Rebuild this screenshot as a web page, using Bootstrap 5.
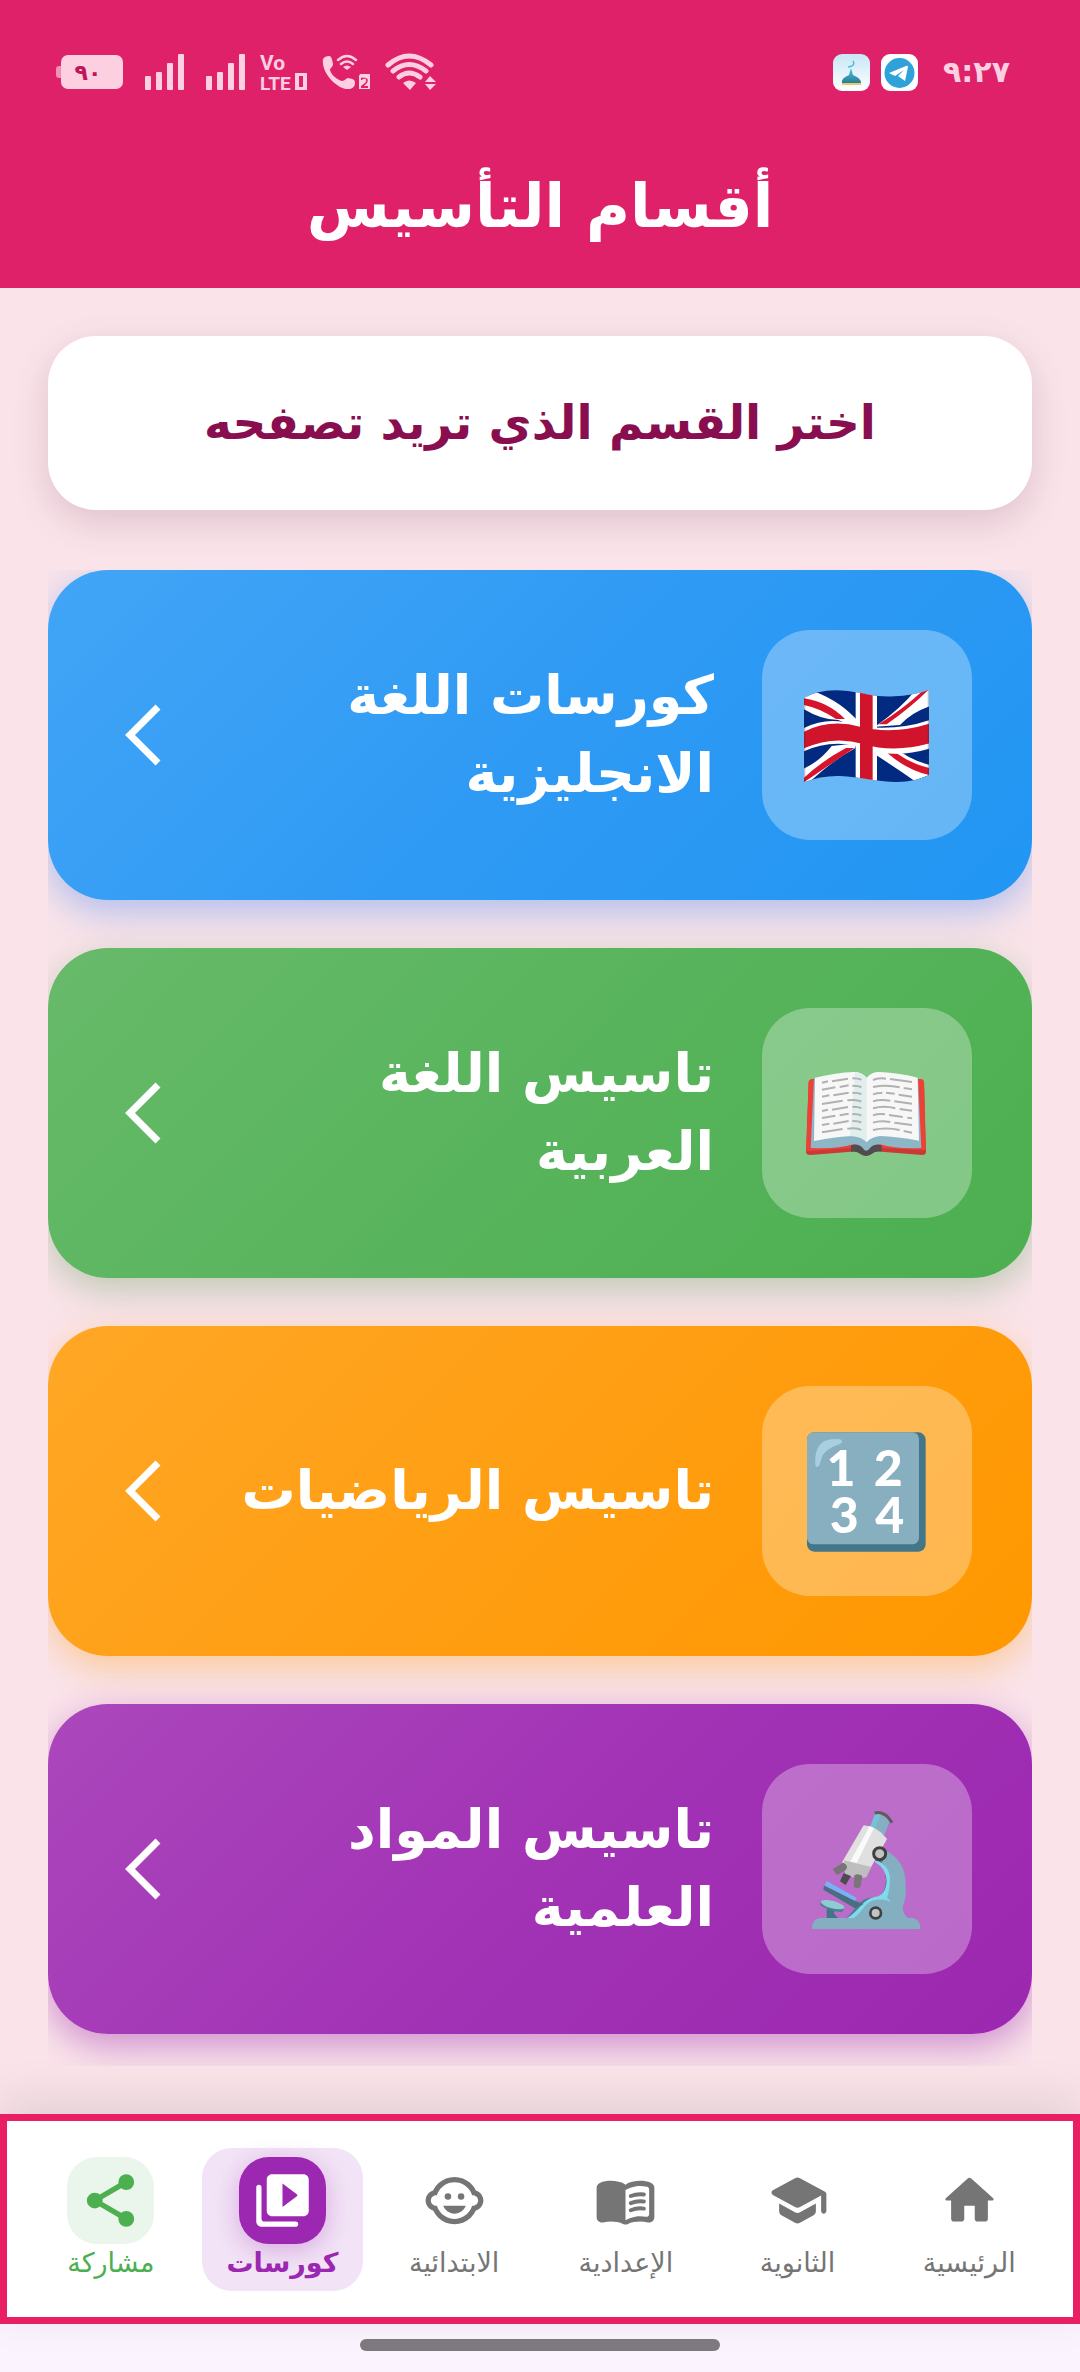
<!DOCTYPE html>
<html lang="ar" dir="rtl">
<head>
<meta charset="utf-8">
<meta name="viewport" content="width=device-width, initial-scale=1">
<title>أقسام التأسيس</title>
<link href="https://cdn.jsdelivr.net/npm/bootstrap@5.3.0/dist/css/bootstrap.min.css" rel="stylesheet">
<style>
  body { background: #fae4ea; font-family: "DejaVu Sans", sans-serif; }
  .app-header { background: #de2168; height: 288px; }
  .status-bar { height: 144px; padding: 48px 70px 48px 56px; color: #fccfe1; }
  .status-bar svg { display: block; }
  .status-tight { gap: 15px; }
  .status-wide { gap: 22px; }
  .status-apps { gap: 11px; }
  .clock { font-size: 30px; line-height: 48px; margin-left: 14px; }
  .app-title { font-size: 60px; line-height: 124px; }
  .page-body { padding: 48px 48px 48px; }
  .prompt-card { border-radius: 48px; height: 174px; margin-bottom: 60px; box-shadow: 0 12px 36px rgba(90, 20, 50, .16); }
  .prompt-card h2 { font-size: 47px; color: #880e4f; }
  .section-list { gap: 48px; padding-bottom: 32px; overflow: hidden; }
  .section-link { height: 330px; border-radius: 60px; padding: 60px; gap: 48px; }
  .section-link span { font-size: 54px; line-height: 78px; }
  .icon-tile { width: 210px; height: 210px; border-radius: 48px; background: rgba(255, 255, 255, .3); overflow: hidden; }
  .chevron { width: 48px; height: 72px; margin-left: 12px; }
  .tone-blue { background: linear-gradient(135deg, #42a5f6, #2f9af4 50%, #2196f3); box-shadow: 0 12px 36px rgba(33, 120, 243, .35); }
  .tone-green { background: linear-gradient(135deg, #67ba6a, #58b45c 50%, #4caf50); box-shadow: 0 12px 36px rgba(76, 150, 80, .35); }
  .tone-orange { background: linear-gradient(135deg, #ffa726, #ff9e12 50%, #ff9800); box-shadow: 0 12px 36px rgba(255, 152, 0, .35); }
  .tone-purple { background: linear-gradient(135deg, #ab47bc, #a233b5 50%, #9c27b0); box-shadow: 0 12px 36px rgba(156, 39, 176, .45); }
  .tab-bar { border: 7px solid #ea1e63; height: 210px; padding: 0 18px; box-shadow: 0 -12px 45px rgba(0, 0, 0, .1); }
  .tab-link { flex: 1 1 0; color: #757575; height: 143px; padding-top: 9px; margin: 0 5px; border-radius: 30px; font-size: 27px; line-height: 38px; }
  .tab-icon { width: 87px; height: 87px; border-radius: 30px; }
  .tab-share { color: #4caf50; }
  .tab-share .tab-icon { background: #eaf6eb; }
  .tab-active { color: #9c27b0; background: #f2e4f6; }
  .tab-active .tab-icon { background: #9c27b0; color: #fff; box-shadow: 0 6px 24px rgba(156, 39, 176, .3); }
  .gesture-area { background: #fbf3fd; height: 48px; padding-top: 15px; }
  .gesture-pill { width: 360px; height: 12px; background: #7f7a80; }
</style>
</head>
<body>
<header class="app-header text-white">
  <div class="status-bar d-flex justify-content-between align-items-center" dir="ltr">
    <div class="d-flex align-items-center status-tight">
      <div class="d-flex align-items-center status-wide">
        <svg width="67" height="36" viewBox="0 0 67 36"><rect y="12" width="10" height="12" rx="3" fill="#f290b5"/><rect x="5" y="1" width="62" height="34" rx="7" fill="currentColor"/><text x="32" y="26" text-anchor="middle" font-family="DejaVu Sans" font-weight="700" font-size="22" fill="#c01558">٩٠</text></svg>
        <svg width="39" height="36" viewBox="0 0 39 36" fill="currentColor"><rect y="22" width="6" height="14" rx="1"/><rect x="11" y="18" width="6" height="18" rx="1"/><rect x="22" y="9" width="6" height="27" rx="1"/><rect x="33" width="6" height="36" rx="1"/></svg>
        <svg width="39" height="36" viewBox="0 0 39 36" fill="currentColor"><rect y="22" width="6" height="14" rx="1"/><rect x="11" y="18" width="6" height="18" rx="1"/><rect x="22" y="9" width="6" height="27" rx="1"/><rect x="33" width="6" height="36" rx="1"/></svg>
      </div>
      <svg width="47" height="48" viewBox="0 -6 47 48" fill="currentColor" font-family="Roboto" font-weight="700"><text x="0" y="16" font-size="21">Vo</text><text x="0" y="36" font-size="19">LTE</text><path fill-rule="evenodd" d="M35 19h12v17H35zM39 22v11h4V22z"/></svg>
      <svg width="48" height="36" viewBox="0 0 48 36" fill="currentColor"><path d="M1 5Q3 2 7 2c2 0 3 2 4 8 0 3-3 4-3 6 1 5 8 10 12 11 3 0 4-3 6-3 6 1 7 2 7 5 0 4-3 6-7 6C15 35-1 19 1 5z"/><g fill="none" stroke="currentColor" stroke-width="2.5" stroke-linecap="round"><path d="M16 6q9-8 18 0M19 10q6-5 12 0"/></g><path d="M21 13q4-3 8 0l-4 3z"/><path fill-rule="evenodd" d="M38 20h10v15H37V22zM39 24v2h1q1-2 4-1 1 2-1 4l-4 3v2h7v-2h-4l3-3q2-4-1-5-4-1-5 0z"/></svg>
      <svg width="51" height="38" viewBox="0 0 51 38"><g fill="none" stroke="currentColor" stroke-width="5" stroke-linecap="round"><path d="M3 12q21-18 43 0M8 18q16-13 33 0M14 24q10-8 21 0"/></g><path d="M18 30q6-5 13 0l-6 7zM40 29l5-6 6 6zM40 31h11l-6 6z" fill="currentColor"/></svg>
    </div>
    <div class="d-flex align-items-center status-apps">
      <svg width="37" height="37" viewBox="0 0 37 37"><defs><linearGradient id="sky" x2="0" y2="1"><stop stop-color="#c8e7f5"/><stop offset="1" stop-color="#fff"/></linearGradient><linearGradient id="dome" x2="0" y2="1"><stop stop-color="#4cc3e6"/><stop offset="1" stop-color="#277f94"/></linearGradient></defs><rect width="37" height="37" rx="9" fill="url(#sky)"/><path d="M9 29q-1-5 7-8l2-7 2 7q8 3 8 8z" fill="url(#dome)"/><path d="M20 7q3 5-5 6" fill="none" stroke="#52bfe0" stroke-width="1.5"/><path d="M9 30h19" stroke="#e6cc69" stroke-width="2"/></svg>
      <svg width="37" height="37" viewBox="0 0 37 37"><rect width="37" height="37" rx="9" fill="#fff"/><circle cx="18.500" cy="19" r="15" fill="#2fa3d9"/><path d="M8 19l17-7q2-1 2 1l-3 14-7-5 6-6-9 6z" fill="#fff"/></svg>
      <time class="clock fw-bold">٩:٢٧</time>
    </div>
  </div>
  <h1 class="app-title fw-bold text-center mb-0">أقسام التأسيس</h1>
</header>

<main class="page-body">
  <div class="prompt-card bg-white d-flex align-items-center justify-content-center">
    <h2 class="fw-bold mb-0">اختر القسم الذي تريد تصفحه</h2>
  </div>
  <nav class="section-list d-flex flex-column" aria-label="الأقسام">
    <a href="#english" class="section-link tone-blue d-flex align-items-center text-white text-decoration-none">
      <div class="icon-tile flex-shrink-0">
        <svg class="d-block w-100 h-100" viewBox="66 60 630 630">
          <defs><clipPath id="wave"><path d="M192 263Q245 233 323 243C385 251 405 262 463 259Q515 257 567 240V495Q520 518 463 516C400 513 360 501 300 498Q245 496 192 517z"/></clipPath></defs>
          <g clip-path="url(#wave)"><rect x="190" y="235" width="380" height="290" fill="#012a80"/>
            <path d="M180 245L225 245Q305 275 360 340L360 360 295 330Q240 330 180 290zM580 225V285Q515 305 480 345L405 350Q490 290 530 235zM180 535V480Q235 460 275 408L350 400 345 415Q280 450 215 510zM400 410H460Q510 450 570 465V495L523 512Q470 475 400 430z" fill="#fff"/>
            <path d="M188 264Q265 275 315 327H288Q240 294 188 284zM567 238Q515 290 440 343H415Q485 300 545 245zM192 517Q275 460 343 414H318Q250 450 192 503zM443 430H470Q510 460 570 475V496Q500 480 443 430z" fill="#d6152c"/>
            <path d="M190 355Q270 315 350 348 470 365 570 330V415Q470 445 400 420 280 380 190 425z" fill="#fff"/>
            <path d="M347 235H411V520H347z" fill="#fff"/>
            <path d="M190 366Q270 325 360 350 460 375 570 340V400Q460 430 370 402 280 375 190 416zM360 235H398V520H360z" fill="#d0142b"/>
            <path d="M192 263V517M567 240V495" stroke="#333" stroke-opacity=".3" stroke-width="8" fill="none"/>
          </g>
        </svg>
      </div>
      <span class="fw-bold flex-grow-1">كورسات اللغة<br>الانجليزية</span>
      <svg class="chevron flex-shrink-0" viewBox="0 0 48 72" fill="none" stroke="#fff" stroke-width="7"><path d="M38 8L10 36l28 28"/></svg>
    </a>
    <a href="#arabic" class="section-link tone-green d-flex align-items-center text-white text-decoration-none">
      <div class="icon-tile flex-shrink-0">
        <svg class="d-block w-100 h-100" viewBox="66 54 630 630">
          <path d="M206 276Q207 267 222 267H536Q551 267 552 276L558 486Q558 495 546 495L425 485Q405 482 398 490 378 506 358 490 350 482 333 485L212 495Q198 495 198 486z" fill="#c93a36"/>
          <path d="M206 276Q207 267 222 267H536Q551 267 552 276L557 480 425 474H333L199 484z" fill="#ef4038"/>
          <path d="M222 264L212 474Q290 478 340 463 360 462 370 478 380 488 390 478 400 462 420 463 470 478 544 474L534 264z" fill="#8db7c7"/>
          <path d="M333 466Q355 460 368 474 378 492 390 474 403 460 425 466V484Q405 482 398 490 378 506 358 490 350 482 333 485z" fill="#4e4e50"/>
          <path d="M225 263Q290 248 340 246 366 245 380 263 394 245 420 246 480 249 533 263L537 452Q470 440 420 438 394 440 380 457 366 440 340 438 290 440 222 453z" fill="#f7f7f7"/>
          <path d="M345 246Q366 248 380 265V455Q365 440 330 438z" fill="#e1eeee"/>
          <g fill="none" stroke="#b1b1b1" stroke-width="6">
            <g id="pageLines"><path d="M246 278l18-4M276 274l48-8M337 265q20 0 27 5M246 299l40-7M299 291l27-5M337 287q20 0 27 5M246 320l22-4M280 316l46-8M337 308q20 0 27 5M246 342l62-10M322 331q30-4 42 4"/></g>
            <use href="#pageLines" y="85"/>
            <path d="M399 270q15-7 39-4M450 267l66 9M399 291q40-8 80 1M491 294l25 4M399 313q15-5 28-4M438 308l26 3M476 314l40 6M399 334q20-7 52-2M463 334l53 7M399 355q35-9 67 0M479 357l37 5M399 376q17-6 36-3M447 375l41 6M502 383l14 2M399 398q22-8 52-2M463 398l53 7M399 420q38-9 80 0M491 423l25 5"/>
          </g>
        </svg>
      </div>
      <span class="fw-bold flex-grow-1">تاسيس اللغة<br>العربية</span>
      <svg class="chevron flex-shrink-0" viewBox="0 0 48 72" fill="none" stroke="#fff" stroke-width="7"><path d="M38 8L10 36l28 28"/></svg>
    </a>
    <a href="#math" class="section-link tone-orange d-flex align-items-center text-white text-decoration-none">
      <div class="icon-tile flex-shrink-0">
        <svg class="d-block w-100 h-100" viewBox="66 48 630 630">
          <rect x="201" y="187" width="356" height="358" rx="22" fill="#437688"/>
          <rect x="201" y="187" width="336" height="336" rx="20" fill="#88afc0"/>
          <path d="M226 286Q222 230 254 213 275 204 300 208 313 213 300 222 262 234 248 256L238 286Q230 296 226 286z" fill="#a7cfdf"/>
          <g fill="#fff" font-family="Lato, sans-serif" font-weight="900" font-size="150" text-anchor="middle" direction="ltr"><text x="303" y="348">1</text><text x="445" y="348">2</text><text x="313" y="489">3</text><text x="449" y="489">4</text></g>
        </svg>
      </div>
      <span class="fw-bold flex-grow-1">تاسيس الرياضيات</span>
      <svg class="chevron flex-shrink-0" viewBox="0 0 48 72" fill="none" stroke="#fff" stroke-width="7"><path d="M38 8L10 36l28 28"/></svg>
    </a>
    <a href="#science" class="section-link tone-purple d-flex align-items-center text-white text-decoration-none">
      <div class="icon-tile flex-shrink-0">
        <svg class="d-block w-100 h-100" viewBox="66 57 630 630">
          <path d="M412 350Q435 365 438 405 435 450 408 458 370 455 350 485L320 519H350L400 475 455 465 460 400 430 340z" fill="#4e7c8e"/>
          <path d="M440 318Q498 350 497 420 500 460 488 485 487 508 505 519H520Q541 525 541 552H216Q216 522 240 519H330Q355 500 372 475 395 452 435 461 455 420 425 355z" fill="#84afc0"/>
          <path d="M403 350Q440 370 440 410 437 445 415 454 385 458 365 480 340 508 322 519H342Q360 505 376 482 395 462 420 464 440 462 453 472 445 460 441 458 451 430 450 395 445 360 412 347z" fill="#7fdaec"/>
          <path d="M252 422L352 470 370 478 345 490 250 434z" fill="#466f80"/><path d="M260 408L350 459 345 468 254 421z" fill="#74b3f7"/>
          <path d="M260 490H288L281 505 294 519H260z" fill="#427587"/><path d="M242 472L312 490 307 502Q270 500 241 481z" fill="#4d7f92"/><ellipse cx="278" cy="479" rx="36" ry="11" transform="rotate(14 278 479)" fill="#91cbd2"/>
          <path d="M407 202L451 224 433 270 389 247z" fill="#83b1c1"/><path d="M407 203L422 209 403 255 390 249z" fill="#77c3d6"/>
          <path d="M404 204Q434 196 456 233" fill="none" stroke="#5d5a60" stroke-width="9"/>
          <path d="M371 241Q415 245 441 282L379 391 306 352z" fill="#e0e0e0"/><path d="M387 243L402 249 350 354 330 350 383 256z" fill="#fafafa"/>
          <path d="M312 346L394 366 379 397Q345 405 315 386z" fill="#bebebe"/>
          <path d="M278 373L309 353Q327 360 318 374L291 390z" fill="#757575"/><path d="M311 385L333 393 317 420 300 409z" fill="#4c4c4c"/><path d="M343 391Q355 384 367 393L361 426Q351 432 341 425z" fill="#777"/>
          <circle cx="419" cy="326" r="18" fill="#c4c4c4" stroke="#404040" stroke-width="9"/><circle cx="407" cy="504" r="16" fill="#c4c4c4" stroke="#404040" stroke-width="8"/>
        </svg>
      </div>
      <span class="fw-bold flex-grow-1">تاسيس المواد<br>العلمية</span>
      <svg class="chevron flex-shrink-0" viewBox="0 0 48 72" fill="none" stroke="#fff" stroke-width="7"><path d="M38 8L10 36l28 28"/></svg>
    </a>
  </nav>
</main>

<footer>
  <nav class="tab-bar bg-white d-flex align-items-center position-relative" aria-label="التنقل">
    <a href="#home" class="tab-link d-flex flex-column align-items-center text-decoration-none">
      <span class="tab-icon d-flex align-items-center justify-content-center"><svg width="63" height="63" viewBox="0 0 24 24" fill="currentColor"><path d="M10 19v-5h4v5c0 .55.45 1 1 1h3c.55 0 1-.45 1-1v-7h1.700c.46 0 .68-.57.33-.87L12.670 3.600c-.38-.34-.96-.34-1.340 0l-8.360 7.530c-.34.3-.13.87.33.87H5v7c0 .55.45 1 1 1h3c.55 0 1-.45 1-1z"/></svg></span>الرئيسية
    </a>
    <a href="#secondary" class="tab-link d-flex flex-column align-items-center text-decoration-none">
      <span class="tab-icon d-flex align-items-center justify-content-center"><svg width="63" height="63" viewBox="0 0 24 24" fill="currentColor"><path d="M5 13.180v2.810c0 .73.4 1.410 1.040 1.760l5 2.730c.6.33 1.320.33 1.920 0l5-2.730c.64-.35 1.040-1.030 1.040-1.760v-2.810l-6.040 3.300c-.6.33-1.320.33-1.920 0L5 13.180zm6.040-9.660l-8.430 4.600c-.69.38-.69 1.380 0 1.760l8.430 4.600c.6.33 1.320.33 1.920 0L21 10.090V16c0 .55.45 1 1 1s1-.45 1-1V9.590c0-.37-.2-.7-.52-.88l-9.520-5.190c-.6-.32-1.320-.32-1.920 0z"/></svg></span>الثانوية
    </a>
    <a href="#preparatory" class="tab-link d-flex flex-column align-items-center text-decoration-none">
      <span class="tab-icon d-flex align-items-center justify-content-center"><svg width="63" height="63" viewBox="0 0 24 24" fill="currentColor"><path d="M17.500 4.500c-1.950 0-4.050.4-5.500 1.500-1.450-1.100-3.550-1.500-5.500-1.500-1.450 0-2.990.22-4.280.79C1.490 5.620 1 6.330 1 7.140v11.280c0 1.300 1.220 2.260 2.480 1.940.98-.25 2.020-.36 3.020-.36 1.560 0 3.220.26 4.560.92.6.3 1.280.3 1.870 0 1.340-.67 3-.92 4.560-.92 1 0 2.040.11 3.020.36 1.260.33 2.480-.63 2.480-1.940V7.140c0-.81-.49-1.520-1.220-1.850-1.280-.57-2.820-.79-4.270-.79zM21 17.230c0 .63-.58 1.090-1.200.98-.75-.14-1.530-.2-2.300-.2-1.700 0-4.150.65-5.500 1.500V8c1.350-.85 3.800-1.500 5.500-1.500.92 0 1.830.09 2.700.28.46.1.8.51.8.98v9.470z"/><path d="M14 10.300q2.500-1 5-.6M14 13q2.500-1 5-.6M14 15.700q2.500-1 5-.6" fill="none" stroke="currentColor" stroke-width="1.500" stroke-linecap="round"/></svg></span>الإعدادية
    </a>
    <a href="#primary" class="tab-link d-flex flex-column align-items-center text-decoration-none">
      <span class="tab-icon d-flex align-items-center justify-content-center"><svg width="63" height="63" viewBox="0 0 24 24" fill="currentColor"><path d="M22.940 12.660c.04-.21.06-.43.06-.66s-.02-.45-.06-.66c-.25-1.510-1.360-2.740-2.810-3.170-.53-1.120-1.280-2.100-2.190-2.910C16.360 3.850 14.280 3 12 3s-4.360.85-5.940 2.260c-.92.81-1.670 1.800-2.190 2.910-1.450.43-2.560 1.650-2.810 3.170-.04.21-.06.43-.06.66s.02.45.06.66c.25 1.510 1.360 2.740 2.810 3.170.52 1.110 1.270 2.090 2.170 2.890C7.620 20.140 9.710 21 12 21s4.380-.86 5.970-2.280c.9-.8 1.650-1.790 2.170-2.890 1.440-.43 2.550-1.650 2.800-3.170zM19 14c-.1 0-.19-.02-.29-.03-.2.67-.49 1.290-.86 1.860C16.600 17.740 14.450 19 12 19s-4.600-1.260-5.850-3.170c-.37-.57-.66-1.190-.86-1.860-.1.01-.19.03-.29.03-1.100 0-2-.9-2-2s.9-2 2-2c.1 0 .19.02.29.03.2-.67.49-1.290.86-1.860C7.400 6.260 9.550 5 12 5s4.600 1.260 5.850 3.170c.37.57.66 1.190.86 1.860.1-.01.19-.03.29-.03 1.100 0 2 .9 2 2s-.9 2-2 2z"/><circle cx="14.500" cy="10.500" r="1.250"/><circle cx="9.500" cy="10.500" r="1.250"/><path d="M7.700 14c.76 1.770 2.300 3 4.300 3s3.540-1.230 4.300-3z"/></svg></span>الابتدائية
    </a>
    <a href="#courses" aria-current="page" class="tab-link tab-active fw-bold d-flex flex-column align-items-center text-decoration-none">
      <span class="tab-icon d-flex align-items-center justify-content-center"><svg width="63" height="63" viewBox="0 0 24 24" fill="currentColor"><path fill-rule="evenodd" d="M3 6c-.55 0-1 .45-1 1v13c0 1.100.9 2 2 2h13c.55 0 1-.45 1-1s-.45-1-1-1H5c-.55 0-1-.45-1-1V7c0-.55-.45-1-1-1zm17-4H8c-1.100 0-2 .9-2 2v12c0 1.100.9 2 2 2h12c1.100 0 2-.9 2-2V4c0-1.100-.9-2-2-2zm-8 12.500v-9l5.470 4.100c.27.2.27.6 0 .8z"/></svg></span>كورسات
    </a>
    <a href="#share" class="tab-link tab-share d-flex flex-column align-items-center text-decoration-none">
      <span class="tab-icon d-flex align-items-center justify-content-center"><svg width="63" height="63" viewBox="0 0 24 24" fill="currentColor"><circle cx="18" cy="5" r="3"/><circle cx="6" cy="12" r="3"/><circle cx="18" cy="19" r="3"/><path d="M18 5L6 12l12 7" fill="none" stroke="currentColor" stroke-width="2"/></svg></span>مشاركة
    </a>
  </nav>
  <div class="gesture-area d-flex align-items-start justify-content-center">
    <div class="gesture-pill rounded-pill"></div>
  </div>
</footer>
<script src="https://cdn.jsdelivr.net/npm/bootstrap@5.3.0/dist/js/bootstrap.bundle.min.js"></script>
</body>
</html>
